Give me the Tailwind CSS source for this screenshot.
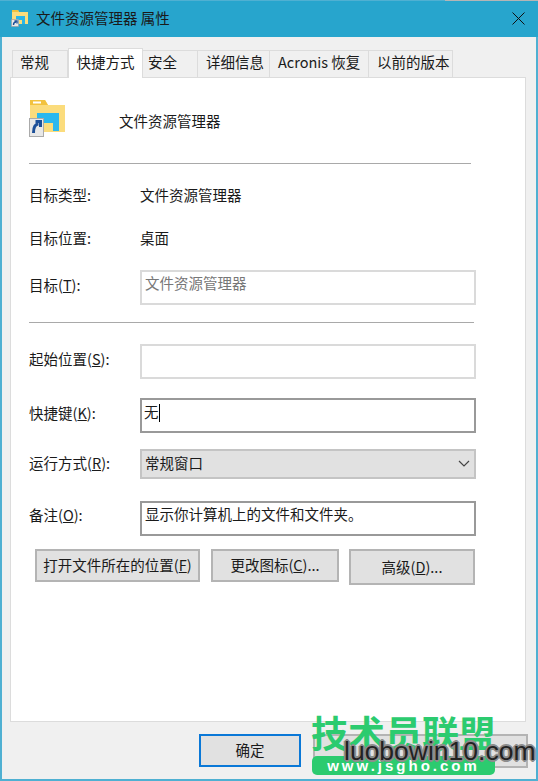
<!DOCTYPE html>
<html lang="zh">
<head>
    <meta charset="UTF-8">
    <title>文件资源管理器 属性</title>
    <script src="https://cdn.jsdelivr.net/npm/@tailwindcss/browser@4"></script>
</head>
<body class="w-[538px] h-[781px] overflow-hidden font-['Noto_Sans_CJK_SC',sans-serif] text-[14.5px] leading-none text-[#1a1a1a]">
<div class="relative w-[538px] h-[781px] flex flex-col bg-[#f0f0f0] border-x-2 border-b-2 border-[#4fb0d2]">

    <!-- title bar -->
    <div class="h-[37px] -mx-[2px] shrink-0 bg-[#27a5cd] border-t border-[#4fb0d2] flex items-center pl-[11px] pr-[13px] pb-[2px]">
        <svg class="w-[18px] h-[18px] mr-[7px]" viewBox="0 0 18 18">
            <path d="M1 1h6l1 2h9v12H1z" fill="#fcdc7c"/>
            <path d="M1 1h6l1 2H1z" fill="#f2c23e"/>
            <path d="M5 7h9v8h-3v-4H8v4H5z" fill="#2ab6ea"/>
            <rect x="0.500" y="10.500" width="7" height="7" fill="#e8e8e8" stroke="#999" stroke-width=".6"/>
            <path d="M2.500 16c0-2 1-3 2.500-3M3.500 12H6V14.500" fill="none" stroke="#1c4f98" stroke-width="1.400"/>
        </svg>
        <span>文件资源管理器 属性</span>
        <svg class="ml-auto w-[13px] h-[13px]" viewBox="0 0 13 13"><path d="M0.500 0.500L12.500 12.500M12.500 0.500L0.500 12.500" stroke="#111" stroke-width="1" fill="none"/></svg>
    </div>
    <div class="absolute left-[443px] top-0 w-[93px] h-[1px] bg-[#b5b5b5]"></div>

    <!-- tabs -->
    <div class="h-[40px] shrink-0 flex items-end pl-[10px]">
        <div class="w-[56px] h-[27px] pl-[7px] pb-[3px] flex items-center border border-b-0 border-[#dcdcdc]">常规</div>
        <div class="w-[75px] h-[30px] -mb-[1px] z-10 pb-[3px] flex items-center justify-center bg-white border border-b-0 border-[#dcdcdc]">快捷方式</div>
        <div class="w-[55px] h-[27px] pl-[5px] pb-[3px] flex items-center border border-b-0 border-l-0 border-[#dcdcdc]">安全</div>
        <div class="w-[72px] h-[27px] pl-[8px] pb-[3px] flex items-center border border-b-0 border-l-0 border-[#dcdcdc]">详细信息</div>
        <div class="w-[99px] h-[27px] pl-[8px] pb-[3px] flex items-center border border-b-0 border-l-0 border-[#dcdcdc] whitespace-nowrap">Acronis 恢复</div>
        <div class="w-[84px] h-[27px] pl-[8px] pb-[3px] flex items-center border border-b-0 border-l-0 border-[#dcdcdc] whitespace-nowrap">以前的版本</div>
    </div>

    <!-- panel -->
    <div class="w-[516px] h-[645px] ml-[8px] shrink-0 bg-white border border-[#dcdcdc] pl-[18px] pr-[49px] pt-[23px]">
        <div class="h-[35px] flex items-center">
            <svg class="-ml-[1px] -my-[1px] w-[37px] h-[37px]" viewBox="0 0 37 37">
                <path d="M2 0h15l3 5h17v27H2z" fill="#fbdc7c"/>
                <path d="M2 0h15l3 5H2z" fill="#f2c23e"/>
                <rect x="5" y="1.500" width="8" height="2" fill="#fff"/>
                <path d="M9 13h22v18h-6v-8H15v8H9z" fill="#2bb8ee"/>
                <rect x="1.500" y="18.500" width="14" height="18" fill="#e8e8e8" stroke="#aaa"/>
                <path d="M5.500 33c0-6 2-9 5-9M7.500 21.500H12.500V27" fill="none" stroke="#1c4f98" stroke-width="3"/>
            </svg>
            <span class="ml-[54px] pt-[5px]">文件资源管理器</span>
        </div>
        <div class="h-[1px] mt-[27px] mr-[5px] bg-[#a9a9a9]"></div>

        <div class="mt-[20px] h-[22px] flex items-center"><span class="w-[111px]">目标类型:</span><span>文件资源管理器</span></div>
        <div class="mt-[21px] h-[22px] flex items-center"><span class="w-[111px]">目标位置:</span><span>桌面</span></div>
        <div class="mt-[21px] h-[35px] flex items-center">
            <span class="w-[111px] pb-[4px]">目标(<u>T</u>):</span>
            <div class="w-[336px] h-[35px] border-2 border-[#dadada] pl-[3px] pb-[9px] text-[#777] flex items-center">文件资源管理器</div>
        </div>
        <div class="h-[1px] mt-[17px] mr-[2px] bg-[#a9a9a9]"></div>

        <div class="mt-[21px] h-[35px] flex items-center">
            <span class="w-[111px] pb-[5px]">起始位置(<u>S</u>):</span>
            <div class="w-[336px] h-[35px] border-2 border-[#dadada]"></div>
        </div>
        <div class="mt-[19px] h-[35px] flex items-center">
            <span class="w-[111px] pb-[5px]">快捷键(<u>K</u>):</span>
            <div class="w-[336px] h-[35px] border-2 border-[#999] pl-[2px] pb-[6px] flex items-center">无<span class="w-px h-[18px] bg-black"></span></div>
        </div>
        <div class="mt-[16px] h-[30px] flex items-center">
            <span class="w-[111px] pb-[1px]">运行方式(<u>R</u>):</span>
            <div class="w-[336px] h-[30px] border-2 border-[#c4c4c4] bg-[#e1e1e1] pl-[3px] pr-[4px] pb-[2px] flex items-center">
                常规窗口
                <svg class="ml-auto w-[12px] h-[7px]" viewBox="0 0 12 7"><path d="M1 1l5 5 5-5" fill="none" stroke="#444" stroke-width="1.200"/></svg>
            </div>
        </div>
        <div class="mt-[22px] h-[35px] flex items-center">
            <span class="w-[111px] pb-[7px]">备注(<u>O</u>):</span>
            <div class="w-[336px] h-[35px] border-2 border-[#999] pl-[3px] pb-[8px] flex items-center">显示你计算机上的文件和文件夹。</div>
        </div>

        <div class="mt-[13px] flex items-start">
            <div class="ml-[6px] w-[165px] h-[33px] border-2 border-[#b4b4b4] bg-[#e1e1e1] flex items-center justify-center">打开文件所在的位置(<u>F</u>)</div>
            <div class="ml-[11px] w-[128px] h-[33px] border-2 border-[#b4b4b4] bg-[#e1e1e1] flex items-center justify-center">更改图标(<u>C</u>)...</div>
            <div class="ml-[10px] w-[126px] h-[36px] border-2 border-[#b4b4b4] bg-[#e1e1e1] flex items-center justify-center">高级(<u>D</u>)...</div>
        </div>
    </div>

    <!-- footer buttons -->
    <div class="flex items-start pl-[197px] pt-[12px]">
        <div class="w-[102px] h-[33px] border-2 border-[#0a78d7] bg-[#e1e1e1] flex items-center justify-center">确定</div>
        <div class="ml-[12px] w-[215px] h-[34px] border-2 border-[#b4b4b4] bg-[#e1e1e1]"></div>
    </div>

    <!-- watermark -->
    <div class="absolute left-[309px] top-[708px] w-[186px] h-[68px]">
        <div class="text-[37px] leading-[48px] font-bold text-[#2ccb6f]">技术员联盟</div>
        <div class="absolute left-[1px] top-[48px] w-[183px] h-[19px] bg-[#2ccb6f] rounded-[5px] text-white font-bold text-[15px] leading-[19px] tracking-[3px] text-center font-['Liberation_Sans',sans-serif]">www.jsgho.com</div>
        <div class="absolute left-[33px] top-[27px] text-[26.5px] leading-[32px] text-[#222] font-['Liberation_Sans',sans-serif] whitespace-nowrap [text-shadow:1px_1px_0_#8d8d8d,-1px_-1px_0_#8d8d8d,1px_-1px_0_#8d8d8d,-1px_1px_0_#8d8d8d,2px_0_0_#8d8d8d,-2px_0_0_#8d8d8d,0_2px_0_#8d8d8d,0_-2px_0_#8d8d8d]">luobowin10.com</div>
    </div>
</div>
</body>
</html>
